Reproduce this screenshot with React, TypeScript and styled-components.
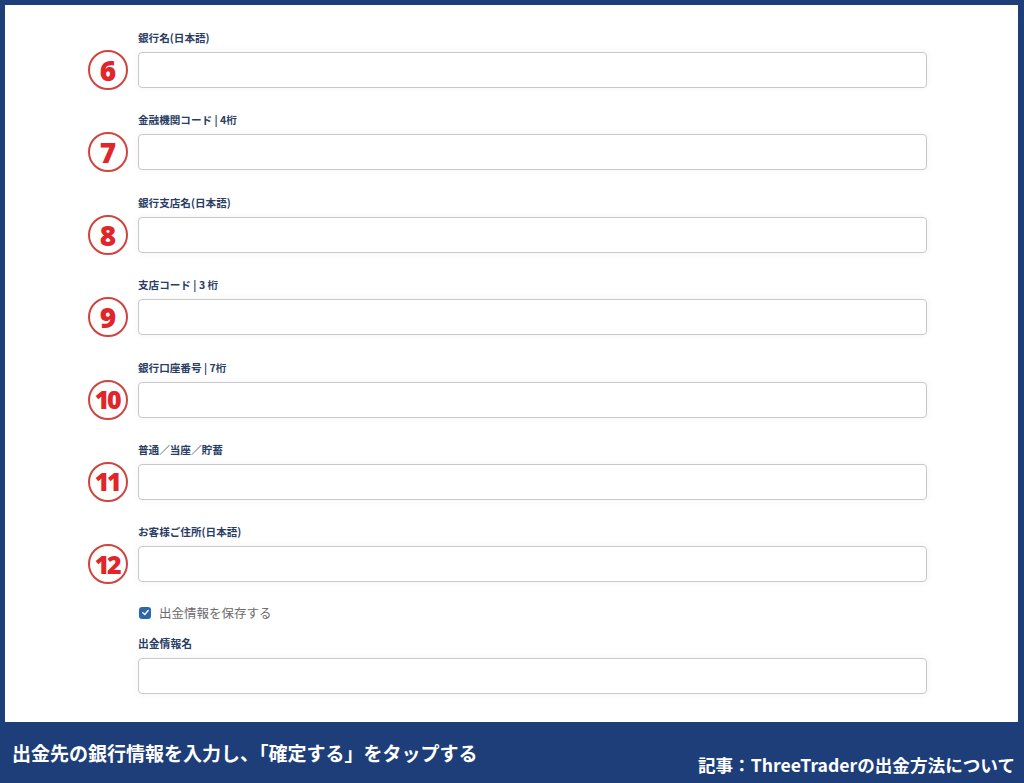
import React from "react";
import styled, { createGlobalStyle } from "styled-components";

const Global = createGlobalStyle`
  html, body { margin: 0; padding: 0; }
  body { font-family: "Noto Sans CJK JP", "Noto Sans", sans-serif; }
`;

const Frame = styled.div`
  width: 1024px;
  height: 783px;
  box-sizing: border-box;
  background: #1d3e79;
  padding: 5px 6px 0 5px;
  display: flex;
  flex-direction: column;
  overflow: hidden;
`;

const Panel = styled.div`
  background: #ffffff;
  height: 717px;
  box-sizing: border-box;
  padding: 26px 0 0 0;
  display: flex;
  flex-direction: column;
  gap: 25.4px;
`;

const Row = styled.div`
  display: grid;
  grid-template-columns: 73px 40px 789px;
  column-gap: 10px;
  grid-template-rows: 14px 36px;
  row-gap: 7px;
`;

const Label = styled.div`
  grid-column: 3;
  grid-row: 1;
  font-size: 10.6px;
  line-height: 14px;
  font-weight: 700;
  color: #2a3d63;
  white-space: nowrap;
`;

const Badge = styled.div<{ $two?: boolean }>`
  grid-column: 2;
  grid-row: 2;
  align-self: center;
  width: 40px;
  height: 40px;
  box-sizing: border-box;
  border: 2px solid #d0443f;
  border-radius: 50%;
  display: flex;
  align-items: center;
  justify-content: center;
  color: #e0262a;
  font-family: "Open Sans", "Noto Sans", sans-serif;
  font-weight: 800;
  font-size: ${(p) => (p.$two ? "25px" : "28px")};
  letter-spacing: ${(p) => (p.$two ? "-2.5px" : "0")};
  padding-right: ${(p) => (p.$two ? "2px" : "0")};
  line-height: 1;
`;

const Input = styled.div`
  grid-column: 3;
  grid-row: 2;
  height: 36px;
  box-sizing: border-box;
  border: 1px solid #c9c9c9;
  border-radius: 4px;
  background: #fff;
  box-shadow: 0 0 8px rgba(0, 0, 0, 0.05);
`;

const Extra = styled.div`
  display: flex;
  flex-direction: column;
  margin-left: 133px;
  width: 789px;
  margin-top: -2px;
`;

const CheckRow = styled.div`
  display: flex;
  align-items: center;
  gap: 8px;
  height: 14px;
  margin-left: 1px;
`;

const Box = styled.span`
  width: 12px;
  height: 12px;
  border-radius: 3px;
  background: #2e66ad;
  display: flex;
  align-items: center;
  justify-content: center;
`;

const CheckText = styled.span`
  font-size: 12.5px;
  color: #6b6b6b;
  line-height: 14px;
`;

const SmallLabel = styled.div`
  margin-top: 16px;
  font-size: 10.8px;
  line-height: 14px;
  font-weight: 700;
  color: #2a3d63;
`;

const LastInput = styled.div`
  margin-top: 8px;
  height: 36px;
  box-sizing: border-box;
  border: 1px solid #c9c9c9;
  border-radius: 4px;
  background: #fff;
  box-shadow: 0 0 8px rgba(0, 0, 0, 0.05);
`;

const Footer = styled.div`
  flex: 1;
  display: flex;
  justify-content: space-between;
  color: #ffffff;
  font-weight: 700;
  padding: 0 3px 0 7px;
`;

const Caption = styled.div`
  font-size: 19px;
  line-height: 20px;
  margin-top: 21px;
  font-weight: 700;
`;

const Source = styled.div`
  font-size: 17.6px;
  line-height: 20px;
  margin-top: 33px;
  font-weight: 700;
`;

const fields: { n: string; label: string }[] = [
  { n: "6", label: "銀行名(日本語)" },
  { n: "7", label: "金融機関コード | 4桁" },
  { n: "8", label: "銀行支店名(日本語)" },
  { n: "9", label: "支店コード | 3 桁" },
  { n: "10", label: "銀行口座番号 | 7桁" },
  { n: "11", label: "普通／当座／貯蓄" },
  { n: "12", label: "お客様ご住所(日本語)" },
];

export default function App() {
  return (
    <>
      <Global />
      <Frame>
        <Panel>
          {fields.map((f) => (
            <Row key={f.n}>
              <Label>{f.label}</Label>
              <Badge $two={f.n.length > 1}>{f.n}</Badge>
              <Input />
            </Row>
          ))}
          <Extra>
            <CheckRow>
              <Box>
                <svg width="9" height="9" viewBox="0 0 10 10">
                  <path d="M2 5.2 L4.2 7.3 L8 2.8" fill="none" stroke="#fff" strokeWidth="1.6" strokeLinecap="round" strokeLinejoin="round" />
                </svg>
              </Box>
              <CheckText>出金情報を保存する</CheckText>
            </CheckRow>
            <SmallLabel>出金情報名</SmallLabel>
            <LastInput />
          </Extra>
        </Panel>
        <Footer>
          <Caption>出金先の銀行情報を入力し、「確定する」をタップする</Caption>
          <Source>記事：ThreeTraderの出金方法について</Source>
        </Footer>
      </Frame>
    </>
  );
}
